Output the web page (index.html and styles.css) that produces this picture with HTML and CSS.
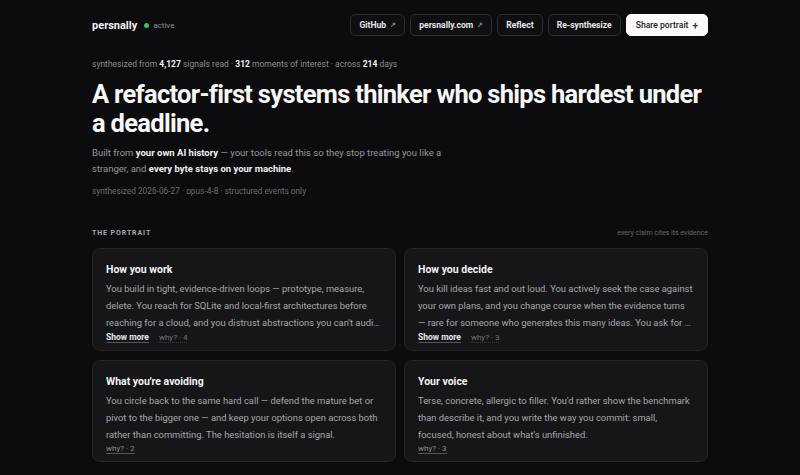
FILE: index.html
```html
<!DOCTYPE html>
<html lang="en">
<head>
<meta charset="UTF-8" />
<meta name="viewport" content="width=device-width, initial-scale=1" />
<title>persnally — portrait</title>
<link rel="stylesheet" href="styles.css">
</head>
<body>
  <div class="page">
    <header class="topbar">
      <div class="brand">
        <span class="logo">persnally</span>
        <span class="status"><span class="dot"></span>active</span>
      </div>
      <nav class="actions">
        <button class="btn">GitHub <span class="arrow">↗</span></button>
        <button class="btn">persnally.com <span class="arrow">↗</span></button>
        <button class="btn">Reflect</button>
        <button class="btn">Re-synthesize</button>
        <button class="btn btn-light">Share portrait <span class="plus">+</span></button>
      </nav>
    </header>

    <p class="stats">synthesized from <b>4,127</b> signals read · <b>312</b> moments of interest · across <b>214</b> days</p>

    <h1 class="headline">A refactor-first systems thinker who ships hardest under a deadline.</h1>

    <p class="lede">Built from <b>your own AI history</b> — your tools read this so they stop treating you like a stranger, and <b>every byte stays on your machine</b>.</p>

    <p class="meta">synthesized 2026-06-27 · opus-4-8 · structured events only</p>

    <section class="portrait">
      <div class="section-head">
        <h2>THE PORTRAIT</h2>
        <span class="note">every claim cites its evidence</span>
      </div>

      <div class="cards">
        <article class="card">
          <h3>How you work</h3>
          <p class="clamp">You build in tight, evidence-driven loops — prototype, measure, delete. You reach for SQLite and local-first architectures before reaching for a cloud, and you distrust abstractions you can't audit, even when they'd save you a week.</p>
          <div class="card-foot"><a class="more">Show more</a><a class="why">why? · 4</a></div>
        </article>
        <article class="card">
          <h3>How you decide</h3>
          <p class="clamp">You kill ideas fast and out loud. You actively seek the case against your own plans, and you change course when the evidence turns — rare for someone who generates this many ideas. You ask for a second opinion before you commit.</p>
          <div class="card-foot"><a class="more">Show more</a><a class="why">why? · 3</a></div>
        </article>
        <article class="card">
          <h3>What you're avoiding</h3>
          <p>You circle back to the same hard call — defend the mature bet or pivot to the bigger one — and keep your options open across both rather than committing. The hesitation is itself a signal.</p>
          <div class="card-foot"><a class="why underline">why? · 2</a></div>
        </article>
        <article class="card">
          <h3>Your voice</h3>
          <p>Terse, concrete, allergic to filler. You'd rather show the benchmark than describe it, and you write the way you commit: small, focused, honest about what's unfinished.</p>
          <div class="card-foot"><a class="why underline">why? · 3</a></div>
        </article>
      </div>
    </section>
  </div>
</body>
</html>
```

FILE: styles.css
```css
body {
  margin: 0;
  background: #0c0c0e;
  color: #ededee;
  font-family: Roboto, "Noto Sans", sans-serif;
  -webkit-font-smoothing: antialiased;
}

.page {
  width: 616px;
  margin: 0 auto;
  padding-top: 14px;
}

/* Top bar */
.topbar {
  display: flex;
  justify-content: space-between;
  align-items: center;
}

.brand {
  display: flex;
  align-items: center;
  gap: 7px;
}

.logo {
  font-size: 11px;
  font-weight: 700;
  color: #f2f2f3;
}

.status {
  display: flex;
  align-items: center;
  gap: 4px;
  font-size: 8px;
  color: #8d8d93;
}

.dot {
  width: 5px;
  height: 5px;
  border-radius: 50%;
  background: #2fc46a;
}

.actions {
  display: flex;
  gap: 5px;
}

.btn {
  font-family: inherit;
  font-size: 8.6px;
  font-weight: 700;
  color: #e6e6e8;
  background: #0f0f12;
  border: 1px solid #2c2c31;
  border-radius: 5px;
  height: 22px;
  padding: 0 8px;
  display: flex;
  align-items: center;
  gap: 4px;
}

.btn .arrow {
  font-size: 7px;
  color: #8a8a90;
}

.btn-light {
  background: #fafafa;
  border-color: #fafafa;
  color: #1a1a1c;
  font-weight: 500;
  padding: 0 9px;
}

.btn-light .plus {
  font-size: 10px;
  color: #333;
}

/* Intro */
.stats {
  margin: 23px 0 0;
  font-size: 8.5px;
  color: #8b8b91;
}

.stats b {
  color: #f0f0f1;
  font-weight: 700;
}

.headline {
  margin: 11px 0 0;
  font-size: 25.5px;
  line-height: 29px;
  font-weight: 700;
  letter-spacing: -0.7px;
  color: #f7f7f8;
}

.lede {
  margin: 7px 0 0;
  width: 355px;
  font-size: 9.5px;
  line-height: 15.5px;
  color: #96969c;
}

.lede b {
  color: #f0f0f1;
  font-weight: 700;
}

.meta {
  margin: 10px 0 0;
  font-size: 8.3px;
  color: #6b6b71;
}

/* Portrait section */
.portrait {
  margin-top: 33px;
}

.section-head {
  display: flex;
  justify-content: space-between;
  align-items: center;
  margin-bottom: 11px;
}

.section-head h2 {
  margin: 0;
  font-size: 7px;
  font-weight: 700;
  letter-spacing: 0.9px;
  color: #a9a9ae;
}

.note {
  font-size: 7px;
  color: #66666c;
}

.cards {
  display: grid;
  grid-template-columns: 1fr 1fr;
  gap: 9px 8px;
}

.card {
  background: #161618;
  border: 1px solid #232326;
  border-radius: 8px;
  padding: 14px 13px 7px;
}

.card h3 {
  margin: 0;
  font-size: 10.5px;
  font-weight: 700;
  color: #f2f2f3;
}

.card p {
  margin: 4px 0 0;
  font-size: 9.4px;
  line-height: 17px;
  color: #a6a6ab;
}

.card p.clamp {
  display: -webkit-box;
  -webkit-line-clamp: 3;
  -webkit-box-orient: vertical;
  overflow: hidden;
}

.card-foot {
  display: flex;
  align-items: center;
  gap: 10px;
  margin-top: 1px;
}

.more {
  font-size: 8.5px;
  font-weight: 700;
  color: #e6e6e8;
  border-bottom: 1px solid #55555a;
}

.why {
  font-size: 8px;
  color: #6f6f75;
  border-bottom: 1px dotted #3a3a3f;
}

.why.underline {
  color: #8a8a90;
  border-bottom: 1px solid #55555a;
}
```
